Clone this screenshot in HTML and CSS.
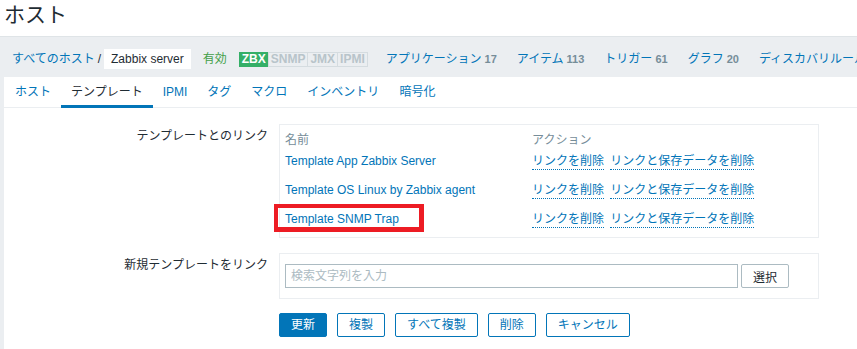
FILE: index.html
```html
<!DOCTYPE html>
<html lang="ja">
<head>
  <meta charset="utf-8">
  <title>ホスト</title>
  <link rel="stylesheet" href="styles.css">
</head>
<body>

<!-- Page title -->
<header class="page-header">
  <h1>ホスト</h1>
</header>

<div class="main">

  <!-- Host navigation -->
  <nav class="host-nav">
    <a class="crumb" href="#">すべてのホスト</a>
    <span class="sep">/</span>
    <a class="crumb-current" href="#">Zabbix server</a>
    <span class="status-on">有効</span>
    <div class="badges">
      <span class="badge badge-green">ZBX</span>
      <span class="badge">SNMP</span>
      <span class="badge">JMX</span>
      <span class="badge">IPMI</span>
    </div>
    <a class="nav-item first" href="#">アプリケーション<span class="count">17</span></a>
    <a class="nav-item" href="#">アイテム<span class="count">113</span></a>
    <a class="nav-item" href="#">トリガー<span class="count">61</span></a>
    <a class="nav-item" href="#">グラフ<span class="count">20</span></a>
    <a class="nav-item" href="#">ディスカバリルール<span class="count">3</span></a>
  </nav>

  <div class="card">
    <!-- Tabs -->
    <ul class="tabs">
      <li><a href="#">ホスト</a></li>
      <li class="active"><a href="#">テンプレート</a></li>
      <li><a href="#">IPMI</a></li>
      <li><a href="#">タグ</a></li>
      <li><a href="#">マクロ</a></li>
      <li><a href="#">インベントリ</a></li>
      <li><a href="#">暗号化</a></li>
    </ul>

    <!-- Templates form -->
    <form class="form">
      <label class="form-label">テンプレートとのリンク</label>
      <div class="field-box">
        <table class="linked">
          <thead>
            <tr><th class="col-name">名前</th><th>アクション</th></tr>
          </thead>
          <tbody id="linked-rows"></tbody>
        </table>
      </div>

      <label class="form-label">新規テンプレートをリンク</label>
      <div class="field-box new-link">
        <input class="search" type="text" placeholder="検索文字列を入力">
        <button type="button" class="btn-select">選択</button>
      </div>

      <div></div>
      <div class="actions">
        <button type="button" class="btn btn-primary">更新</button>
        <button type="button" class="btn">複製</button>
        <button type="button" class="btn">すべて複製</button>
        <button type="button" class="btn">削除</button>
        <button type="button" class="btn">キャンセル</button>
      </div>
    </form>
  </div>
</div>

<script>
  // Linked templates
  const templates = [
    { name: "Template App Zabbix Server" },
    { name: "Template OS Linux by Zabbix agent" },
    { name: "Template SNMP Trap", marked: true }
  ];
  const rows = document.getElementById('linked-rows');
  rows.innerHTML = templates.map(t => `
    <tr>
      <td class="${t.marked ? 'marked' : ''}">
        <a class="tpl-link" href="#">${t.name}</a>
        ${t.marked ? '<span class="highlight"></span>' : ''}
      </td>
      <td>
        <a class="unlink" href="#">リンクを削除</a>
        <a class="unlink" href="#">リンクと保存データを削除</a>
      </td>
    </tr>`).join('');
</script>

</body>
</html>
```

FILE: styles.css
```css
body {
  margin: 0;
  font-family: "Liberation Sans", Arial, "Noto Sans CJK JP", sans-serif;
  font-size: 12px;
  color: #1f2c33;
  background: #fff;
}
a {
  color: #0275b8;
  text-decoration: none;
}

/* header */
.page-header {
  height: 37px;
  box-sizing: border-box;
  padding: 4px 0 0 4px;
  border-bottom: 1px solid #dfe4e7;
}
.page-header h1 {
  margin: 0;
  font-size: 21px;
  font-weight: normal;
  line-height: 22px;
}

.main {
  background: #ebeef1;
  padding-left: 4px;
  height: 312px;
  overflow: hidden;
}

/* host nav */
.host-nav {
  display: flex;
  align-items: center;
  height: 40px;
  box-sizing: border-box;
  padding: 4px 0 0 8px;
  white-space: nowrap;
  line-height: 16px;
}
.sep {
  margin: 0 3px;
}
.crumb-current {
  background: #fff;
  color: #1f2c33;
  padding: 0 7px;
  line-height: 20px;
}
.status-on {
  color: #429e47;
  margin-left: 12px;
}
.badges {
  display: flex;
  margin-left: 12px;
}
.badge {
  font-size: 12px;
  font-weight: bold;
  line-height: 13px;
  padding: 0 2px;
  border: 1px solid #d5dce0;
  color: #b8c4ca;
  background: #ebeef1;
  margin-left: -1px;
}
.badge-green {
  background: #34af67;
  border-color: #34af67;
  color: #fff;
  margin-left: 0;
}
.nav-item {
  margin-right: 20px;
}
.nav-item.first {
  margin-left: 18px;
}
.count {
  margin-left: 3px;
  color: #768d99;
  font-weight: bold;
  font-size: 11px;
}

/* card + tabs */
.card {
  background: #fff;
  height: 100%;
}
.tabs {
  display: flex;
  list-style: none;
  margin: 0;
  padding: 0 0 0 1px;
  border-bottom: 1px solid #ebeef1;
}
.tabs li {
  margin-bottom: -1px;
}
.tabs li a {
  display: block;
  padding: 0 10px;
  line-height: 31px;
}
.tabs li.active a {
  color: #1f2c33;
  box-shadow: inset 0 -3px #0275b8;
}

/* form */
.form {
  display: grid;
  grid-template-columns: 264px 540px;
  column-gap: 11px;
  row-gap: 15px;
  padding-top: 16px;
  align-items: start;
}
.form-label {
  text-align: right;
  padding-top: 5px;
  line-height: 14px;
}
.field-box {
  border: 1px solid #ebeef1;
  padding: 0 5px;
}
.linked {
  border-collapse: collapse;
}
.linked th {
  text-align: left;
  font-weight: normal;
  color: #768d99;
  height: 26px;
  padding: 0;
  vertical-align: middle;
}
.col-name {
  width: 247px;
}
.linked td {
  height: 29px;
  box-sizing: border-box;
  padding: 3px 0 0;
  vertical-align: top;
  line-height: 15px;
  white-space: nowrap;
}
.linked tbody tr:last-child td {
  height: 28px;
}
.linked td.marked {
  position: relative;
}
.highlight {
  position: absolute;
  left: -11px;
  top: -5px;
  width: 150px;
  height: 28px;
  box-sizing: border-box;
  border: 5px solid #ed1c24;
  border-left-width: 4px;
  border-top-width: 4px;
}
.unlink {
  display: inline-block;
  line-height: 15px;
  border-bottom: 1px dotted #0275b8;
  margin-right: 3px;
}

.new-link {
  display: flex;
  gap: 3px;
  padding: 10px 5px;
}
.search {
  width: 453px;
  height: 24px;
  box-sizing: border-box;
  border: 1px solid #acbbc2;
  padding: 0 5px;
  font: inherit;
  color: #1f2c33;
  outline: none;
}
.search::placeholder {
  color: #acbbc2;
}
.btn-select {
  width: 48px;
  height: 24px;
  border: 1px solid #acbbc2;
  border-radius: 2px;
  background: #fff;
  color: #1f2c33;
  font: inherit;
  padding: 0;
}

.actions {
  display: flex;
  gap: 10px;
  margin-top: -1px;
}
.btn {
  height: 24px;
  padding: 0 11px;
  border: 1px solid #0275b8;
  border-radius: 2px;
  background: #fff;
  color: #0275b8;
  font: inherit;
  line-height: 22px;
}
.btn-primary {
  background: #0275b8;
  color: #fff;
}
```
